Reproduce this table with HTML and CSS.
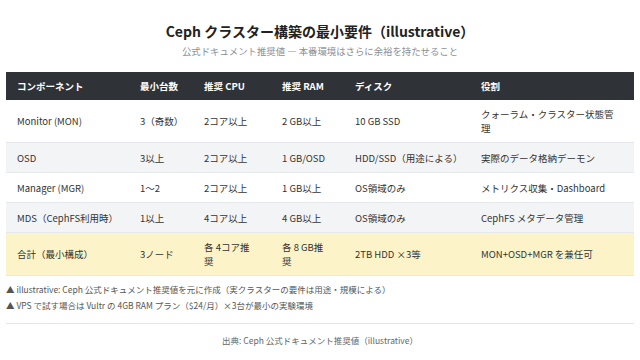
FILE: index.html
```html
<!DOCTYPE html>
<html lang="ja">
<head>
<meta charset="utf-8">
<link rel="stylesheet" href="styles.css">
</head>
<body>
<div class="page">
  <header class="head">
    <h1 class="title">Ceph クラスター構築の最小要件（illustrative）</h1>
    <p class="subtitle">公式ドキュメント推奨値 — 本番環境はさらに余裕を持たせること</p>
  </header>
  <table class="spec">
    <colgroup>
      <col class="c1"><col class="c2"><col class="c3"><col class="c4"><col class="c5"><col class="c6">
    </colgroup>
    <thead>
      <tr><th>コンポーネント</th><th>最小台数</th><th>推奨 CPU</th><th>推奨 RAM</th><th>ディスク</th><th>役割</th></tr>
    </thead>
    <tbody>
      <tr><td>Monitor (MON)</td><td>3（奇数）</td><td>2コア以上</td><td>2 GB以上</td><td>10 GB SSD</td><td>クォーラム・クラスター状態管理</td></tr>
      <tr class="alt"><td>OSD</td><td>3以上</td><td>2コア以上</td><td>1 GB/OSD</td><td>HDD/SSD（用途による）</td><td>実際のデータ格納デーモン</td></tr>
      <tr><td>Manager (MGR)</td><td>1〜2</td><td>2コア以上</td><td>1 GB以上</td><td>OS領域のみ</td><td>メトリクス収集・Dashboard</td></tr>
      <tr class="alt"><td>MDS（CephFS利用時）</td><td>1以上</td><td>4コア以上</td><td>4 GB以上</td><td>OS領域のみ</td><td>CephFS メタデータ管理</td></tr>
      <tr class="total"><td>合計（最小構成）</td><td>3ノード</td><td>各 4コア推奨</td><td>各 8 GB推奨</td><td>2TB HDD ×3等</td><td>MON+OSD+MGR を兼任可</td></tr>
    </tbody>
  </table>
  <ul class="notes">
    <li>▲ illustrative: Ceph 公式ドキュメント推奨値を元に作成（実クラスターの要件は用途・規模による）</li>
    <li>▲ VPS で試す場合は Vultr の 4GB RAM プラン（$24/月）×3台が最小の実験環境</li>
  </ul>
  <footer class="source">出典: Ceph 公式ドキュメント推奨値（illustrative）</footer>
</div>
</body>
</html>
```

FILE: styles.css
```css
* { box-sizing: border-box; }
html, body { margin: 0; padding: 0; background: #fff; }
body {
  font-family: "Noto Sans CJK JP", "Noto Sans", sans-serif;
  color: #333;
  width: 640px;
  height: 360px;
  overflow: hidden;
}
.page { padding: 0 6px; }
.head { text-align: center; padding-top: 20px; }
.title {
  margin: 0;
  font-size: 14px;
  line-height: 22px;
  font-weight: 700;
  color: #222;
}
.subtitle {
  margin: 2px 0 0;
  font-size: 9.4px;
  line-height: 14px;
  color: #8a8f96;
}
.spec {
  margin-top: 14px;
  width: 628px;
  border-collapse: collapse;
  table-layout: fixed;
  font-size: 9.5px;
  line-height: 14px;
}
.c1 { width: 123px; }
.c2 { width: 64px; }
.c3 { width: 78px; }
.c4 { width: 73px; }
.c5 { width: 126px; }
.c6 { width: 164px; }
.spec th {
  background: #2f3237;
  color: #fff;
  font-weight: 700;
  text-align: left;
  padding: 7px 11px;
  height: 28px;
}
.spec td {
  padding: 7px 11px;
  color: #333;
  border-bottom: 1px solid #e6e8eb;
  vertical-align: middle;
  height: 30px;
}
.spec td:nth-child(3),
.spec td:nth-child(4) { padding-right: 18px; }
.spec tr.alt td { background: #f3f4f6; }
.spec tr.total td { background: #fdf3c8; }
.notes {
  list-style: none;
  margin: 5px 0 0;
  padding: 0;
  font-size: 8.5px;
  line-height: 16px;
  color: #555;
}
.source {
  margin-top: 10px;
  border-top: 1px solid #e3e5e8;
  text-align: center;
  font-size: 8.5px;
  line-height: 16px;
  color: #666;
  padding-top: 8px;
}
```
